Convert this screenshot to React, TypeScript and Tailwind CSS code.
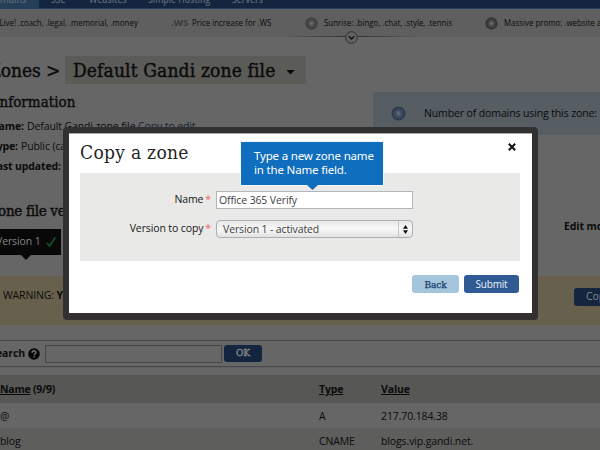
import React from "react";

const sans = "font-['Open_Sans','Noto_Sans',sans-serif]";
const slab = "font-['DejaVu_Serif',serif] [font-stretch:condensed]";
const heading = "[-webkit-text-stroke:0.4px_currentColor]";

function Disc({ color, hole, size }: { color: string; hole: string; size: number }) {
  return (
    <svg width={size} height={size} viewBox="0 0 14 14" className="shrink-0">
      <circle cx="7" cy="7" r="6.6" fill={color} />
      <circle cx="7" cy="7" r="3.6" fill="none" stroke="#ffffff" strokeOpacity=".1" strokeWidth="1.2" />
      <circle cx="7" cy="7" r="2.3" fill={hole} />
    </svg>
  );
}

function NavItem({ children }: { children: React.ReactNode }) {
  return <span className="-mt-[8px] inline-block origin-left scale-x-[0.86]">{children}</span>;
}

function NavBar() {
  return (
    <nav className="flex h-[9px] shrink-0 overflow-hidden whitespace-nowrap border-b border-[#27405f] bg-[#14253f] text-[10px] font-semibold leading-[14px] tracking-normal text-[#5d6876]">
      <div className="h-[8px] w-[39px] shrink-0 bg-[#263f58]"><span className="-mt-[8px] -ml-[12px] block origin-left scale-x-[0.9]">Domains</span></div>
      <div className="ml-[12px] flex w-[38px] shrink-0"><NavItem>SSL</NavItem></div>
      <div className="flex w-[59px] shrink-0"><NavItem>Websites</NavItem></div>
      <div className="flex w-[84px] shrink-0"><NavItem>Simple Hosting</NavItem></div>
      <NavItem>Servers</NavItem>
    </nav>
  );
}

function NewsText({ children }: { children: React.ReactNode }) {
  return <span className="inline-block origin-left scale-x-[0.83]">{children}</span>;
}

function News() {
  return (
    <div className="relative flex h-[28px] shrink-0 items-center whitespace-nowrap bg-[#5f5f5f] text-[9.5px] font-medium tracking-normal text-[#0b0b0b]">
      <div className="w-[171px] shrink-0"><div className="-ml-[11px]"><NewsText>GoLive! .coach, .legal, .memorial, .money</NewsText></div></div>
      <span className="w-[21px] shrink-0 font-bold text-[#3a3a3a]">.WS</span>
      <div className="w-[113px] shrink-0"><NewsText>Price increase for .WS</NewsText></div>
      <Disc size={13} color="#3f3f3f" hole="#666" />
      <div className="ml-[6px] w-[161px] shrink-0"><NewsText>Sunrise: .bingo, .chat, .style, .tennis</NewsText></div>
      <Disc size={13} color="#353535" hole="#666" />
      <div className="ml-[6px] w-[95px] shrink-0"><NewsText>Massive promo: .website and more</NewsText></div>
      <div className="absolute bottom-0 left-[280px] h-px w-[142px] bg-gradient-to-r from-transparent via-[#303030] to-transparent" />
      <svg className="absolute left-[345px] top-[22px]" width="13" height="13" viewBox="0 0 13 13" fill="none">
        <circle cx="6.5" cy="6.5" r="5.8" fill="#626262" stroke="#303030" />
        <path d="M3.8 5.2 6.5 8 9.2 5.2" stroke="#151515" strokeWidth="1.4" />
      </svg>
    </div>
  );
}

function Info({ label, width, children }: { label: string; width: string; children?: React.ReactNode }) {
  return (
    <p className="flex h-[20px] gap-[3px] leading-[20px]">
      <b className={`${width} flex shrink-0 justify-end`}>{label}</b>
      <span>{children}</span>
    </p>
  );
}

function Field({ label, children }: { label: string; children: React.ReactNode }) {
  return (
    <div className="flex h-[18px] items-center">
      <div className="flex w-[131px] justify-end gap-[2px] text-[10.5px] tracking-[-0.12px] text-[#161616]">
        <span>{label}</span><span className="text-[#ef5f5f]">*</span>
      </div>
      <div className="ml-[5px]">{children}</div>
    </div>
  );
}

function Modal() {
  return (
    <section className="absolute left-[63px] top-[127px] h-[193px] w-[475px] rounded-[4px] bg-[#333031] p-[6px] pb-[7px]">
      <div className="flex h-full w-full flex-col border-t border-[#aaa] bg-white px-[11px]">
        <header className="flex h-[39px] shrink-0 justify-between">
          <h2 className={`${slab} mt-[5px] whitespace-nowrap text-[19px] leading-[26px] tracking-[0.3px] text-[#242424]`}>Copy a zone</h2>
          <svg className="mr-[5px] mt-[9px]" width="8" height="8" viewBox="0 0 8 8"><path d="m.8.8 6.4 6.4M7.2.8.8 7.2" stroke="#111" strokeWidth="2" /></svg>
        </header>
        <div className="mr-px flex h-[88px] shrink-0 flex-col gap-[11px] bg-[#e9e9e8] pt-[18px]">
          <Field label="Name">
            <div className="h-[18px] w-[197px] border border-[#b0b8bb] bg-white pl-[2px] text-[10.5px] leading-[17px] tracking-[-0.13px] text-[#3e3e3e]">Office 365 Verify</div>
          </Field>
          <Field label="Version to copy">
            <div className="flex h-[18px] w-[197px] items-center rounded-[4px] border border-[#a9afb1] bg-gradient-to-b from-[#e8e8e8] via-[#f8f8f8] to-[#e2e2e1] pl-[6px] text-[10.5px] leading-[16px] tracking-[-0.13px] text-[#3e3e3e]">
              <span className="flex-1">Version 1 - activated</span>
              <div className="flex h-full w-[14px] items-center justify-center border-l border-[#c5c8c9]">
                <svg width="5" height="9" viewBox="0 0 5 9"><path d="M0 3.7 2.5 0 5 3.7ZM0 5.3 2.5 9 5 5.3Z" fill="#111" /></svg>
              </div>
            </div>
          </Field>
        </div>
        <footer className="mt-[14px] flex justify-end gap-[5px] pr-[2px]">
          <button className={`${slab} h-[18px] w-[47px] rounded-[3px] bg-[#a5c5dc] text-[10px] leading-[17px] tracking-[-0.1px] text-[#173a6a] [-webkit-text-stroke:0.25px_currentColor]`}>Back</button>
          <button className="h-[18px] w-[55px] rounded-[3px] bg-[#305a94] text-[10px] font-medium leading-[17px] tracking-[-0.2px] text-[#e9eff8]">Submit</button>
        </footer>
      </div>
    </section>
  );
}

export default function App() {
  return (
    <main className={`${sans} relative flex h-[450px] w-[600px] flex-col overflow-hidden bg-[#666] text-[10.5px] tracking-[-0.12px] text-[#0b0b0b]`}>
      <NavBar />
      <News />
      <div className={`${slab} ${heading} mt-[19px] flex h-[28px] shrink-0 whitespace-nowrap text-[19px] leading-[28px] tracking-[0.15px]`}>
        <div className="w-[65px] shrink-0 tracking-[-0.1px]"><span className="-ml-[11px]">Zones &gt;</span></div>
        <div className="flex w-[241px] items-center bg-[#5b5b58] pl-[8px]">
          <span>Default Gandi zone file</span>
          <svg className="ml-auto mr-[11px] mt-[4px]" width="9" height="5" viewBox="0 0 10 6"><path d="M0 0H10L5 5.5Z" fill="#080808" /></svg>
        </div>
      </div>
      <div className="flex h-[113px] shrink-0 justify-between whitespace-nowrap">
        <div className="pt-[6px]">
          <h3 className={`${slab} ${heading} -ml-[6px] h-[26px] text-[15px] leading-[24px] tracking-[0.05px]`}>Information</h3>
          <Info label="Name:" width="w-[24px]">Default Gandi zone file <span className="text-[#111f34]">Copy to edit</span></Info>
          <Info label="Type:" width="w-[18px]">Public (cannot</Info>
          <Info label="Last updated:" width="w-[61px]" />
        </div>
        <div className="mt-[8px] flex h-[43px] w-[227px] shrink-0 items-center bg-[#565d63] pl-[18px]">
          <Disc size={15} color="#303d51" hole="#5b6570" />
          <span className="ml-[18px]">Number of domains using this zone:</span>
        </div>
      </div>
      <div className="flex h-[79px] shrink-0 justify-between whitespace-nowrap">
        <div className="pt-[3px]">
          <h3 className={`${slab} ${heading} -ml-[11px] h-[29px] text-[15px] leading-[22px] tracking-[-0.3px]`}>Zone file versions</h3>
          <div className="relative flex h-[26px] w-[61px] items-center bg-[#080808] text-[10.5px] text-[#858585]">
            <span className="-ml-[4px]">Version 1</span>
            <svg className="ml-auto mr-[5px]" width="10" height="12" viewBox="0 0 11 12" fill="none"><path d="M1 7 4 10.5 10 1" stroke="#124e20" strokeWidth="2" /></svg>
            <svg className="absolute left-[20px] top-[25px]" width="12" height="6" viewBox="0 0 12 6"><path d="M0 0H12L6 6Z" fill="#080808" /></svg>
          </div>
        </div>
        <b className="mt-[22px] w-[36px] tracking-[-0.1px]">Edit mode</b>
      </div>
      <div className="flex h-[49px] shrink-0 items-center justify-between overflow-hidden whitespace-nowrap bg-[#66604c]">
        <span className="-mt-[10px] ml-[3px]">WARNING: <b>You</b></span>
        <div className="-mr-[20px] -mt-[8px] h-[18px] w-[46px] rounded-[3px] bg-[#14253f] pl-[12px] font-medium leading-[17px] text-[#858585]">Copy</div>
      </div>
      <div className="mt-[15px] flex h-[27px] shrink-0 items-center border-y border-[#484848] shadow-[0_1px_0_#606060]">
        <b className="flex w-[25px] shrink-0 justify-end">Search</b>
        <svg className="ml-[3px] shrink-0" width="12" height="12" viewBox="0 0 12 12"><circle cx="6" cy="6" r="5.8" fill="#070707" /><path d="M4.1 4.7C4.1 2 8 2.2 8 4.5 8 5.8 6.1 5.8 6.1 7.3M6.1 8.2V9.4" stroke="#777" strokeWidth="1.4" fill="none" /></svg>
        <div className="ml-[5px] h-[18px] w-[177px] border border-[#454545] bg-[#666]" />
        <div className={`${slab} ${heading} ml-[2px] h-[17px] w-[38px] rounded-[3px] bg-[#14253f] text-center text-[10px] leading-[16px] text-[#858585]`}>OK</div>
      </div>
      <div className="mt-[8px] grid shrink-0 grid-cols-[319px_62px_219px] grid-rows-[28px_25px_24px] whitespace-nowrap leading-[28px]">
        <b className="bg-[#575755] tracking-[-0.25px]"><span className="underline">Name</span> (9/9)</b><b className="bg-[#575755] underline">Type</b><b className="bg-[#575755] underline">Value</b>
        <span className="leading-[26px]">@</span><span className="leading-[26px]">A</span><span className="leading-[26px]">217.70.184.38</span>
        <span className="bg-[#5e5e5c] leading-[26px]">blog</span><span className="bg-[#5e5e5c] leading-[26px]">CNAME</span><span className="bg-[#5e5e5c] leading-[26px]">blogs.vip.gandi.net.</span>
      </div>
      <Modal />
      <aside className="absolute left-[241px] top-[142px] h-[43px] w-[142px] whitespace-nowrap bg-[#106ebe] pl-[13px] pt-[7px] font-['Noto_Sans',sans-serif] text-[11.5px] leading-[14px] tracking-[-0.17px] text-white shadow-[0_0_0_1px_#f3f5f7]">
        Type a new zone name<br />in the Name field.
        <svg className="absolute left-[65px] top-[42px]" width="13" height="7" viewBox="0 0 13 7"><path d="M0 0H13L6.5 6Z" fill="#106ebe" /></svg>
      </aside>
    </main>
  );
}
